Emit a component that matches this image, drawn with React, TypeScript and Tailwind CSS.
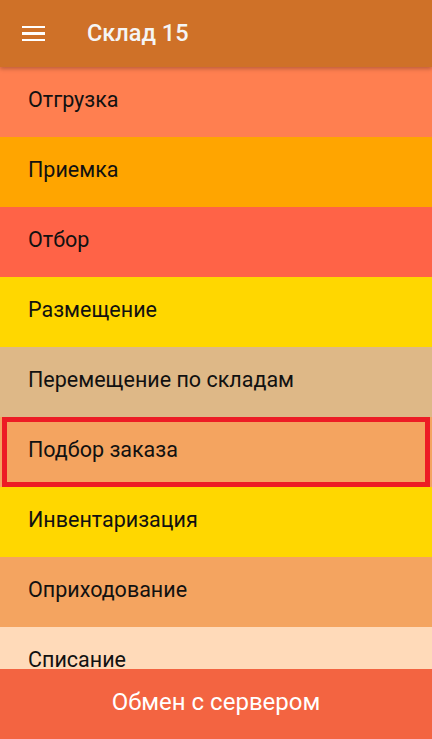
import { useState } from "react";

interface MenuItem {
  label: string;
  color: string;
}

const items: MenuItem[] = [
  { label: "Отгрузка", color: "bg-[#FF7F50]" },
  { label: "Приемка", color: "bg-[#FFA500]" },
  { label: "Отбор", color: "bg-[#FF6347]" },
  { label: "Размещение", color: "bg-[#FFD700]" },
  { label: "Перемещение по складам", color: "bg-[#DEB887]" },
  { label: "Подбор заказа", color: "bg-[#F4A460]" },
  { label: "Инвентаризация", color: "bg-[#FFD700]" },
  { label: "Оприходование", color: "bg-[#F4A460]" },
  { label: "Списание", color: "bg-[#FFDAB9]" },
];

export default function App() {
  const [selected] = useState("Подбор заказа");

  return (
    <div className="flex h-[739px] w-full flex-col overflow-hidden bg-white font-['Roboto',sans-serif]">
      <header className="relative z-10 flex h-[67px] shrink-0 items-center bg-[#CF7128] shadow-[0_2px_4px_rgba(0,0,0,0.25)]">
        <button className="ml-[22px] flex h-[24px] w-[23px] flex-col justify-center gap-[4px]">
          <span className="block h-[2.5px] w-full bg-white" />
          <span className="block h-[2.5px] w-full bg-white" />
          <span className="block h-[2.5px] w-full bg-white" />
        </button>
        <h1 className="ml-[42px] text-[23.5px] font-medium text-[#F5F5F5]">Склад 15</h1>
      </header>

      <main className="flex-1 overflow-hidden">
        {items.map((item) => (
          <div
            key={item.label}
            className={`relative flex h-[70px] items-center pb-[3px] pl-[28px] ${item.color}`}
          >
            <span className="text-[21.5px] text-[#111]">{item.label}</span>
            {item.label === selected && (
              <div className="absolute inset-y-0 left-[2px] right-[2px] border-[5px] border-[#ED1C24]" />
            )}
          </div>
        ))}
      </main>

      <footer className="flex h-[70px] shrink-0 items-center justify-center bg-[#F36441] pb-[4px]">
        <span className="text-[24px] text-white">Обмен с сервером</span>
      </footer>
    </div>
  );
}
